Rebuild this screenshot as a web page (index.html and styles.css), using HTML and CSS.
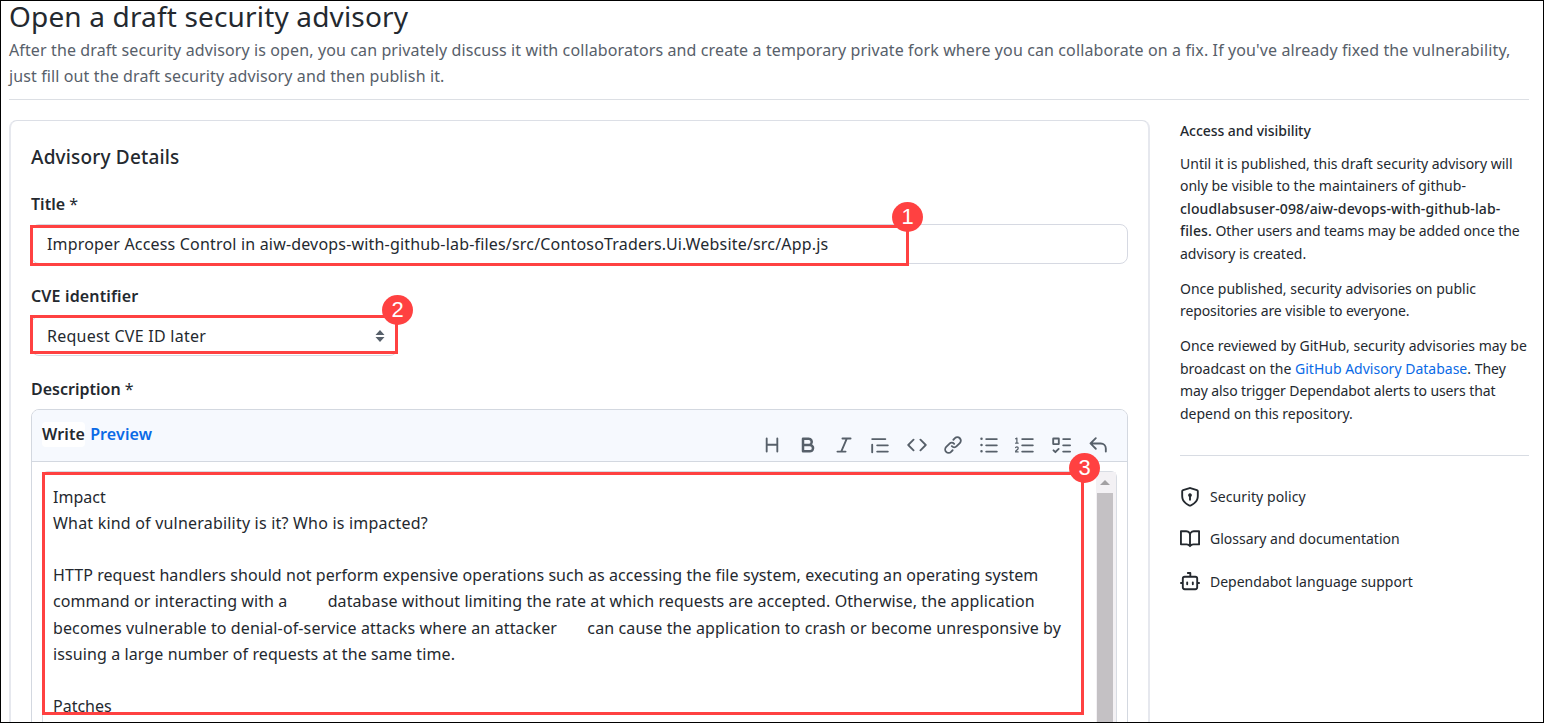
FILE: index.html
```html
<!DOCTYPE html>
<html lang="en">
<head>
<meta charset="utf-8">
<title>Open a draft security advisory</title>
<link rel="stylesheet" href="styles.css">
</head>
<body>
<div class="page">
  <header class="page-head">
    <h1 class="page-title">Open a draft security advisory</h1>
    <p class="page-lead">After the draft security advisory is open, you can privately discuss it with collaborators and create a temporary private fork where you can collaborate on a fix. If you've already fixed the vulnerability,
just fill out the draft security advisory and then publish it.</p>
  </header>
  <div class="columns">
    <main class="card">
      <h2 class="card-title">Advisory Details</h2>
      <div class="label">Title <span class="star">*</span></div>
      <div class="input">
        <span class="input-text">Improper Access Control in aiw-devops-with-github-lab-files/src/ContosoTraders.Ui.Website/src/App.js</span>
        <div class="mark mark-title"><span class="badge">1</span></div>
      </div>
      <div class="label label-cve">CVE identifier</div>
      <div class="input select">
        <span class="select-text">Request CVE ID later</span>
        <svg class="caret" viewBox="0 0 10 14" width="10" height="14"><path d="M5 1 9.5 6h-9zM5 13 .5 8h9z"/></svg>
        <div class="mark mark-cve"><span class="badge">2</span></div>
      </div>
      <div class="label label-desc">Description <span class="star">*</span></div>
      <div class="editor">
        <div class="editor-head">
          <div class="tabs"><span class="tab tab-on">Write</span><span class="tab tab-link">Preview</span></div>
          <div class="tools">
            <svg class="tool" viewBox="0 0 16 16"><path d="M3.75 2a.75.75 0 0 1 .75.75V7h7V2.75a.75.75 0 0 1 1.5 0v10.5a.75.75 0 0 1-1.5 0V8.5h-7v4.75a.75.75 0 0 1-1.5 0V2.75A.75.75 0 0 1 3.75 2Z"/></svg>
            <svg class="tool" viewBox="0 0 16 16"><path d="M4 2h4.5a3.501 3.501 0 0 1 2.852 5.53A3.499 3.499 0 0 1 9.5 14H4a1 1 0 0 1-1-1V3a1 1 0 0 1 1-1Zm1 7v3h4.5a1.5 1.5 0 0 0 0-3Zm3.5-2a1.5 1.5 0 0 0 0-3H5v3Z"/></svg>
            <svg class="tool" viewBox="0 0 16 16"><path d="M6 2.75A.75.75 0 0 1 6.75 2h6.5a.75.75 0 0 1 0 1.5h-2.505l-3.858 9H9.25a.75.75 0 0 1 0 1.5h-6.5a.75.75 0 0 1 0-1.5h2.505l3.858-9H6.75A.75.75 0 0 1 6 2.75Z"/></svg>
            <svg class="tool" viewBox="0 0 16 16"><path d="M1.75 2.5h10.5a.75.75 0 0 1 0 1.5H1.75a.75.75 0 0 1 0-1.5Zm4 5h8.5a.75.75 0 0 1 0 1.5h-8.5a.75.75 0 0 1 0-1.5Zm0 5h8.5a.75.75 0 0 1 0 1.5h-8.5a.75.75 0 0 1 0-1.5ZM2.5 7.75v6a.75.75 0 0 1-1.5 0v-6a.75.75 0 0 1 1.5 0Z"/></svg>
            <svg class="tool" viewBox="0 0 16 16"><path d="m11.28 3.22 4.25 4.25a.75.75 0 0 1 0 1.06l-4.25 4.25a.749.749 0 0 1-1.06-1.06L13.94 8l-3.72-3.72a.749.749 0 0 1 1.06-1.06Zm-6.56 0a.751.751 0 0 1 1.06 1.06L2.06 8l3.72 3.72a.749.749 0 0 1-1.06 1.06L.47 8.53a.75.75 0 0 1 0-1.06Z"/></svg>
            <svg class="tool" viewBox="0 0 16 16"><path d="m7.775 3.275 1.25-1.25a3.5 3.5 0 1 1 4.95 4.95l-2.5 2.5a3.5 3.5 0 0 1-4.95 0 .751.751 0 0 1 1.06-1.06 2 2 0 0 0 2.83 0l2.5-2.5a2.002 2.002 0 0 0-2.83-2.83l-1.25 1.25a.751.751 0 0 1-1.06-1.06Zm-4.69 9.64a2.002 2.002 0 0 0 2.83 0l1.25-1.25a.751.751 0 0 1 1.06 1.06l-1.25 1.25a3.5 3.5 0 1 1-4.95-4.95l2.5-2.5a3.5 3.5 0 0 1 4.95 0 .751.751 0 0 1-1.06 1.06 2 2 0 0 0-2.83 0l-2.5 2.5a2.002 2.002 0 0 0 0 2.83Z"/></svg>
            <svg class="tool" viewBox="0 0 16 16"><path d="M5.75 2.5h8.5a.75.75 0 0 1 0 1.5h-8.5a.75.75 0 0 1 0-1.5Zm0 5h8.5a.75.75 0 0 1 0 1.5h-8.5a.75.75 0 0 1 0-1.5Zm0 5h8.5a.75.75 0 0 1 0 1.5h-8.5a.75.75 0 0 1 0-1.5ZM2 14a1 1 0 1 1 0-2 1 1 0 0 1 0 2Zm1-6a1 1 0 1 1-2 0 1 1 0 0 1 2 0ZM2 4a1 1 0 1 1 0-2 1 1 0 0 1 0 2Z"/></svg>
            <svg class="tool" viewBox="0 0 16 16"><path d="M5 3.25a.75.75 0 0 1 .75-.75h8.5a.75.75 0 0 1 0 1.5h-8.5A.75.75 0 0 1 5 3.25Zm0 5a.75.75 0 0 1 .75-.75h8.5a.75.75 0 0 1 0 1.5h-8.5A.75.75 0 0 1 5 8.25Zm0 5a.75.75 0 0 1 .75-.75h8.5a.75.75 0 0 1 0 1.5h-8.5a.75.75 0 0 1-.75-.75ZM.924 10.32a.5.5 0 0 1-.851-.525l.001-.001.001-.002.002-.004.007-.011c.097-.144.215-.273.348-.384.228-.19.588-.392 1.068-.392.468 0 .858.181 1.126.484.259.294.377.673.377 1.038 0 .987-.686 1.495-1.156 1.845l-.047.035c-.303.225-.522.4-.654.597h1.357a.5.5 0 0 1 0 1H.5a.5.5 0 0 1-.5-.5c0-1.005.692-1.52 1.167-1.875l.035-.025c.531-.396.8-.625.8-1.078a.57.57 0 0 0-.128-.376C1.806 10.068 1.695 10 1.5 10a.658.658 0 0 0-.429.163.835.835 0 0 0-.144.153ZM2.003 2.5V6h.503a.5.5 0 0 1 0 1H.5a.5.5 0 0 1 0-1h.503V3.308l-.28.14a.5.5 0 0 1-.446-.895l1.003-.5a.5.5 0 0 1 .723.447Z"/></svg>
            <svg class="tool" viewBox="0 0 16 16"><path d="M2 2h4a1 1 0 0 1 1 1v4a1 1 0 0 1-1 1H2a1 1 0 0 1-1-1V3a1 1 0 0 1 1-1Zm4.655 8.595a.75.75 0 0 1 0 1.06L4.03 14.28a.75.75 0 0 1-1.06 0l-1.5-1.5a.749.749 0 1 1 1.06-1.06l.97.97 2.095-2.095a.75.75 0 0 1 1.06 0ZM9.75 2.5h5.5a.75.75 0 0 1 0 1.5h-5.5a.75.75 0 0 1 0-1.5Zm0 5h5.5a.75.75 0 0 1 0 1.5h-5.5a.75.75 0 0 1 0-1.5Zm0 5h5.5a.75.75 0 0 1 0 1.5h-5.5a.75.75 0 0 1 0-1.5Zm-7.25-9v3h3v-3Z"/></svg>
            <svg class="tool" viewBox="0 0 16 16"><path d="M6.78 1.97a.75.75 0 0 1 0 1.06L3.81 6h6.44A4.75 4.75 0 0 1 15 10.75v2.5a.75.75 0 0 1-1.5 0v-2.5a3.25 3.25 0 0 0-3.25-3.25H3.81l2.97 2.97a.749.749 0 1 1-1.06 1.06L1.47 7.28a.75.75 0 0 1 0-1.06l4.25-4.25a.75.75 0 0 1 1.06 0Z"/></svg>
          </div>
        </div>
        <div class="textarea">
          <div class="lines">Impact
<span class="l2">What kind of vulnerability is it? Who is impacted?</span>

<span class="l3">HTTP request handlers should not perform expensive operations such as accessing the file system, executing an operating system</span>
<span class="l4">command or interacting with a <i class="gap gap-a"></i>database without limiting the rate at which requests are accepted. Otherwise, the application</span>
<span class="l5">becomes vulnerable to denial-of-service attacks where an attacker <i class="gap gap-b"></i>can cause the application to crash or become unresponsive by</span>
<span class="l6">issuing a large number of requests at the same time.</span>

Patches</div>
          <div class="scrollbar"><div class="arrow"></div><div class="thumb"></div></div>
          <div class="mark mark-body"><span class="badge">3</span></div>
        </div>
      </div>
    </main>
    <aside class="side">
      <h3 class="side-title">Access and visibility</h3>
      <p class="side-text">Until it is published, this draft security advisory will
only be visible to the maintainers of github-
<span class="repo">cloudlabsuser-098/aiw-devops-with-github-lab-
files.</span><span class="tight"> Other users and teams may be added once the</span>
advisory is created.</p>
      <p class="side-text">Once published, security advisories on public
<span class="tight">repositories are visible to everyone.</span></p>
      <p class="side-text">Once reviewed by GitHub, security advisories may be
broadcast on the <span class="link">GitHub Advisory Database</span>. They
<span class="tight">may also trigger Dependabot alerts to users that</span>
depend on this repository.</p>
      <div class="side-links">
        <div class="side-link"><svg class="side-icon" viewBox="0 0 16 16"><path d="m8.533.133 5.25 1.68A1.75 1.75 0 0 1 15 3.48V7c0 1.566-.32 3.182-1.303 4.682-.983 1.498-2.585 2.813-5.032 3.855a1.697 1.697 0 0 1-1.33 0c-2.447-1.042-4.049-2.357-5.032-3.855C1.32 10.182 1 8.566 1 7V3.48a1.75 1.75 0 0 1 1.217-1.667l5.25-1.68a1.748 1.748 0 0 1 1.066 0Zm-.61 1.429-5.25 1.68a.25.25 0 0 0-.173.238V7c0 1.358.275 2.666 1.057 3.86.784 1.194 2.121 2.34 4.366 3.297a.196.196 0 0 0 .154 0c2.245-.956 3.582-2.104 4.366-3.298C13.225 9.666 13.5 8.36 13.5 7V3.48a.25.25 0 0 0-.174-.237l-5.25-1.68a.25.25 0 0 0-.153 0ZM9.5 6.5c0 .536-.286 1.032-.75 1.3v2.45a.75.75 0 0 1-1.5 0V7.8A1.5 1.5 0 1 1 9.5 6.5Z"/></svg><span class="policy">Security policy</span></div>
        <div class="side-link"><svg class="side-icon" viewBox="0 0 16 16"><path d="M0 1.75A.75.75 0 0 1 .75 1h4.253c1.227 0 2.317.59 3 1.501A3.743 3.743 0 0 1 11.006 1h4.245a.75.75 0 0 1 .75.75v10.5a.75.75 0 0 1-.75.75h-4.507a2.25 2.25 0 0 0-1.591.659l-.622.621a.75.75 0 0 1-1.06 0l-.622-.621A2.25 2.25 0 0 0 5.258 13H.75a.75.75 0 0 1-.75-.75Zm7.251 10.324.004-5.073-.002-2.253A2.25 2.25 0 0 0 5.003 2.5H1.5v9h3.757a3.75 3.75 0 0 1 1.994.574ZM8.755 4.75l-.004 7.322a3.752 3.752 0 0 1 1.992-.572H14.5v-9h-3.495a2.25 2.25 0 0 0-2.25 2.25Z"/></svg><span>Glossary and documentation</span></div>
        <div class="side-link"><svg class="side-icon" viewBox="0 0 16 16"><path d="M5.75 7.5a.75.75 0 0 1 .75.75v1.5a.75.75 0 0 1-1.5 0v-1.5a.75.75 0 0 1 .75-.75Zm5.25.75a.75.75 0 0 0-1.5 0v1.5a.75.75 0 0 0 1.5 0v-1.5Z"/><path d="M6.25 0h2A.75.75 0 0 1 9 .75V3h3.25A2.25 2.25 0 0 1 14.5 5.25V8h.75a.75.75 0 0 1 0 1.5h-.75v2.75a2.25 2.25 0 0 1-2.25 2.25h-8.5a2.25 2.25 0 0 1-2.25-2.25V9.5H.75a.75.75 0 0 1 0-1.5h.75V5.25A2.25 2.25 0 0 1 3.75 3H7.5V1.5H6.25a.75.75 0 0 1 0-1.5ZM3 5.25v7c0 .414.336.75.75.75h8.5a.75.75 0 0 0 .75-.75v-7a.75.75 0 0 0-.75-.75h-8.5a.75.75 0 0 0-.75.75Z"/></svg><span>Dependabot language support</span></div>
      </div>
    </aside>
  </div>
</div>
</body>
</html>
```
FILE: styles.css
```css
* { box-sizing: border-box; }
body { margin: 0; background: #fff; color: #24292f; font-family: "Noto Sans", "Open Sans", sans-serif; font-size: 16px; }
h1, h2, h3, p { margin: 0; }
.page { width: 1544px; height: 723px; overflow: hidden; border: 1px solid #000; padding: 0 14px 0 8px; }
.page-head { height: 99px; border-bottom: 1px solid #dcdfe4; }
.page-title { font-size: 28px; font-weight: 400; line-height: 30px; height: 32px; letter-spacing: 0.16px; white-space: nowrap; }
.page-lead { color: #57606a; line-height: 26px; padding-top: 4px; letter-spacing: 0.115px; white-space: pre; }
.columns { display: flex; gap: 30px; padding-top: 20px; }
.card { width: 1141px; height: 660px; flex: none; border: 2px solid #e6e8ee; border-top: 1px solid #dcdfe6; border-radius: 8px; padding: 21px 20px 20px; }
.card-title { font-size: 19px; font-weight: 500; line-height: 30px; height: 48px; letter-spacing: 0.18px; }
.label { font-size: 16px; font-weight: 600; line-height: 24px; height: 34px; white-space: nowrap; padding-top: 2px; }
.star { font-weight: 400; }
.input { position: relative; height: 40px; width: 1097px; border: 1px solid #d6d9e2; border-radius: 8px; display: flex; align-items: center; padding: 0 15px; white-space: nowrap; }
.input-text { letter-spacing: 0.18px; }
.select-text { letter-spacing: 0.26px; }
.label-cve, .label-desc { margin-top: 19px; height: 34px; }
.label-cve { margin-top: 18px; letter-spacing: 0.15px; }
.select { width: 367px; justify-content: space-between; padding-right: 12px; }
.caret { fill: #57606a; }
.mark { position: absolute; border: 3px solid #ff4141; }
.mark-title { left: -2px; top: 0; width: 879px; height: 41px; }
.mark-cve { left: -2px; top: -2px; width: 368px; height: 39px; }
.mark-body { left: -1px; top: 0; width: 1042px; height: 243px; }
.badge { position: absolute; right: -17px; top: -26px; width: 31px; height: 30px; border-radius: 50%; background: #ff4141; color: #fff; font: 22px/30px "Liberation Sans", sans-serif; text-align: center; }
.mark-cve .badge { right: -18px; top: -23px; }
.mark-body .badge { right: -19px; top: -22px; }
.editor { width: 1097px; height: 400px; border: 1px solid #d3d8e0; border-radius: 8px 8px 0 0; overflow: hidden; }
.editor-head { height: 52px; background: #f6f9fe; border-bottom: 1px solid #d3d8e0; display: flex; justify-content: space-between; padding: 0 19.500px 0 10px; }
.tabs { display: flex; gap: 5px; padding-top: 12px; line-height: 25px; height: 37px; font-weight: 600; letter-spacing: 0.14px; }
.tab-on { background: #fff; border-radius: 4px; }
.tab-link, .link { color: #0a6ae6; }
.tools { display: flex; gap: 16.2px; padding-top: 25px; }
.tool { width: 20px; height: 20px; fill: #57606a; }
.textarea { position: relative; margin: 9px 10px 0; height: 360px; border: 1px solid #d8dce3; border-radius: 6px; display: flex; justify-content: space-between; }
.lines { white-space: pre; line-height: 26.2px; padding: 11.500px 0 0 10px; }
.l2 { letter-spacing: 0.2px; }
.l3 { letter-spacing: 0.072px; }
.l4 { letter-spacing: 0.095px; }
.l5 { letter-spacing: 0.125px; }
.l6 { letter-spacing: 0.1px; }
.gap { display: inline-block; }
.gap-a { width: 36px; }
.gap-b { width: 26px; }
.scrollbar { width: 20px; flex: none; background: #f3f1f4; padding: 8px 3px 0 1px; display: flex; flex-direction: column; align-items: center; }
.arrow { width: 0; height: 0; border: 5px solid transparent; border-top: 0; border-bottom-color: #a2a0a2; margin-bottom: 8px; }
.thumb { width: 16px; flex: 1; background: #c4c1c4; }
.side { width: 349px; font-size: 14px; }
.side-title { font-size: 14px; font-weight: 500; line-height: 22px; margin-bottom: 10.500px; letter-spacing: -0.05px; }
.side-text { line-height: 22.5px; white-space: pre; margin-bottom: 12.5px; }
.repo { font-weight: 500; letter-spacing: 0.13px; }
.tight { letter-spacing: -0.1px; }
.side-links { border-top: 1px solid #d8dce3; margin-top: 29.500px; padding-top: 30px; display: flex; flex-direction: column; gap: 20.5px; }
.side-link { display: flex; align-items: center; gap: 10px; line-height: 22px; white-space: nowrap; }
.side-icon { width: 20px; height: 20px; fill: #24292f; }
.policy { letter-spacing: 0.1px; }
```
